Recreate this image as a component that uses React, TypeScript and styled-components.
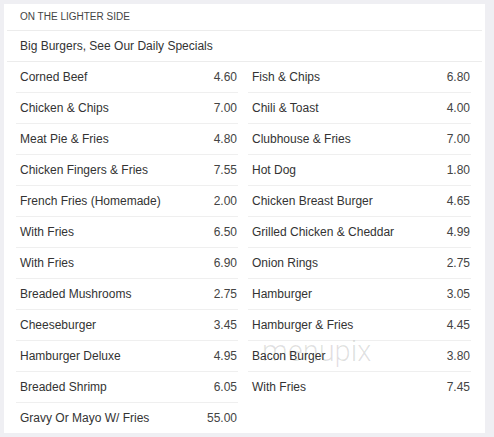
import React from 'react';
import styled, { createGlobalStyle } from 'styled-components';

type Item = { name: string; price: string };

const leftItems: Item[] = [
  { name: 'Corned Beef', price: '4.60' },
  { name: 'Chicken & Chips', price: '7.00' },
  { name: 'Meat Pie & Fries', price: '4.80' },
  { name: 'Chicken Fingers & Fries', price: '7.55' },
  { name: 'French Fries (Homemade)', price: '2.00' },
  { name: 'With Fries', price: '6.50' },
  { name: 'With Fries', price: '6.90' },
  { name: 'Breaded Mushrooms', price: '2.75' },
  { name: 'Cheeseburger', price: '3.45' },
  { name: 'Hamburger Deluxe', price: '4.95' },
  { name: 'Breaded Shrimp', price: '6.05' },
  { name: 'Gravy Or Mayo W/ Fries', price: '55.00' },
];

const rightItems: Item[] = [
  { name: 'Fish & Chips', price: '6.80' },
  { name: 'Chili & Toast', price: '4.00' },
  { name: 'Clubhouse & Fries', price: '7.00' },
  { name: 'Hot Dog', price: '1.80' },
  { name: 'Chicken Breast Burger', price: '4.65' },
  { name: 'Grilled Chicken & Cheddar', price: '4.99' },
  { name: 'Onion Rings', price: '2.75' },
  { name: 'Hamburger', price: '3.05' },
  { name: 'Hamburger & Fries', price: '4.45' },
  { name: 'Bacon Burger', price: '3.80' },
  { name: 'With Fries', price: '7.45' },
];

function App() {
  const renderColumn = (items: Item[]) => (
    <Column>
      {items.map((item, i) => (
        <Row key={i} last={i === items.length - 1}>
          <span>{item.name}</span>
          <Price>{item.price}</Price>
        </Row>
      ))}
    </Column>
  );

  return (
    <>
      <GlobalStyle />
      <Page>
        <Card>
          <SectionTitle>ON THE LIGHTER SIDE</SectionTitle>
          <SectionNote>Big Burgers, See Our Daily Specials</SectionNote>
          <Columns>
            {renderColumn(leftItems)}
            {renderColumn(rightItems)}
          </Columns>
          <Watermark>menupix</Watermark>
        </Card>
      </Page>
    </>
  );
}

export default App;

const GlobalStyle = createGlobalStyle`
  html, body {
    margin: 0;
    padding: 0;
    background: #efeff3;
  }
  body {
    font-family: "Liberation Sans", Arial, sans-serif;
    color: #333333;
  }
`;

const Page = styled.div`
  width: 494px;
  height: 437px;
  padding: 4px 9px 4px 4px;
  box-sizing: border-box;
  background: #efeff3;
`;

const Card = styled.div`
  position: relative;
  background: #ffffff;
  height: 429px;
  box-sizing: border-box;
  padding: 0 3px;
  overflow: hidden;
`;

const SectionTitle = styled.div`
  height: 26px;
  line-height: 26px;
  padding-left: 13px;
  font-size: 10px;
  color: #444444;
  border-bottom: 1px solid #ececec;
`;

const SectionNote = styled.div`
  height: 30px;
  line-height: 30px;
  padding-left: 13px;
  font-size: 12px;
  color: #333333;
  border-bottom: 1px solid #ececec;
`;

const Columns = styled.div`
  display: grid;
  grid-template-columns: 222px 223px;
  column-gap: 10px;
  padding-left: 9px;
`;

const Column = styled.div`
  display: flex;
  flex-direction: column;
`;

const Row = styled.div<{ last: boolean }>`
  display: flex;
  justify-content: space-between;
  align-items: center;
  height: 30px;
  padding: 0 1px 0 4px;
  font-size: 12px;
  color: #333333;
  border-bottom: 1px solid ${({ last }) => (last ? 'transparent' : '#efefef')};
`;

const Price = styled.span`
  color: #444444;
`;

const Watermark = styled.div`
  position: absolute;
  left: 258px;
  top: 333px;
  font-family: Roboto, "DejaVu Sans", sans-serif;
  font-weight: 300;
  font-size: 29px;
  line-height: 29px;
  color: rgba(0, 0, 0, 0.12);
  pointer-events: none;
`;
